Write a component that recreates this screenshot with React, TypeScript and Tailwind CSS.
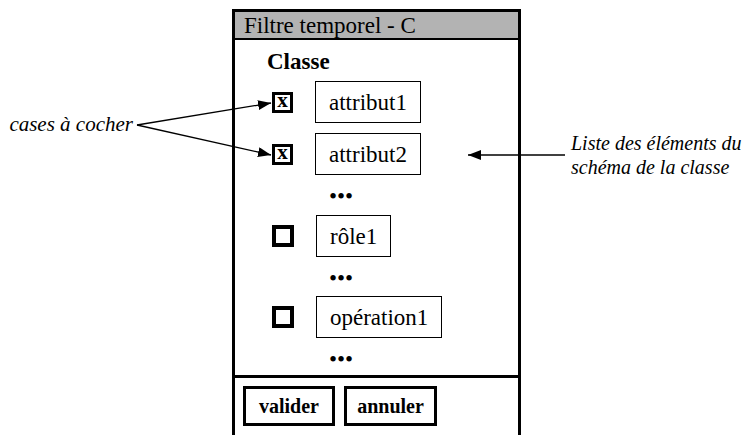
import React from "react";

const Checkbox = ({ checked }: { checked?: boolean }) =>
  checked ? (
    <div className="w-[21px] h-[21px] border-[3px] border-black flex items-center justify-center shrink-0">
      <span className="text-[21px] font-bold leading-none -mt-[4px]">x</span>
    </div>
  ) : (
    <div className="w-[22px] h-[22px] border-[4px] border-black shrink-0" />
  );

const Field = ({ label }: { label: string }) => (
  <div className="h-[42px] border border-black px-[13px] flex items-center text-[23px] leading-none">
    {label}
  </div>
);

const Row = ({ label, checked }: { label: string; checked?: boolean }) => (
  <div className="flex items-center h-[42px] pl-[37px] gap-[22px]">
    <Checkbox checked={checked} />
    <Field label={label} />
  </div>
);

const Dots = ({ h }: { h: string }) => (
  <div className={`${h} pl-[94px] pt-[7px] text-[23px] leading-[30px]`}>•••</div>
);

const App = () => {
  return (
    <div className="relative w-[745px] h-[435px] overflow-hidden bg-white text-black font-['Liberation_Serif',serif] flex">
      {/* left note */}
      <div className="w-[232px] shrink-0 pt-[112px] pr-[99px] text-right italic text-[21px] leading-[24px]">
        cases à cocher
      </div>

      {/* dialog */}
      <div className="w-[289px] shrink-0 mt-[9px] h-[440px] border-[3px] border-b-0 border-black flex flex-col">
        <div className="h-[28px] bg-[#b3b3b3] border-b-2 border-black pl-[9px] pt-[1px] text-[23px] leading-[26px]">
          Filtre temporel - C
        </div>
        <div className="h-[41px] pl-[32px] pt-[9px] text-[23px] font-bold leading-[26px]">Classe</div>
        <Row label="attribut1" checked />
        <div className="h-[10px]" />
        <Row label="attribut2" checked />
        <Dots h="h-[40px]" />
        <Row label="rôle1" />
        <Dots h="h-[39px]" />
        <Row label="opération1" />
        <Dots h="h-[37px]" />
        <div className="border-t-[3px] border-black pt-[8px] pl-[8px] flex gap-[9px]">
          <button className="w-[92px] h-[40px] border-[3px] border-black text-[20px] font-bold">valider</button>
          <button className="w-[93px] h-[40px] border-[3px] border-black text-[20px] font-bold">annuler</button>
        </div>
      </div>

      {/* right note */}
      <div className="pl-[50px] pt-[131px] italic text-[20px] leading-[24px] whitespace-nowrap">
        <div>Liste des éléments du</div>
        <div>schéma de la classe</div>
      </div>

      <svg className="absolute inset-0 pointer-events-none" width="745" height="435">
        <defs>
          <marker id="head" markerUnits="userSpaceOnUse" markerWidth="13" markerHeight="10" refX="13" refY="5" orient="auto">
            <path d="M0,0 L13,5 L0,10 z" fill="black" />
          </marker>
        </defs>
        <line x1="137" y1="125" x2="271" y2="103" stroke="black" strokeWidth="1.3" markerEnd="url(#head)" />
        <line x1="137" y1="125" x2="271" y2="155" stroke="black" strokeWidth="1.3" markerEnd="url(#head)" />
        <line x1="565" y1="155" x2="468" y2="155" stroke="black" strokeWidth="1.3" markerEnd="url(#head)" />
      </svg>
    </div>
  );
};

export default App;
